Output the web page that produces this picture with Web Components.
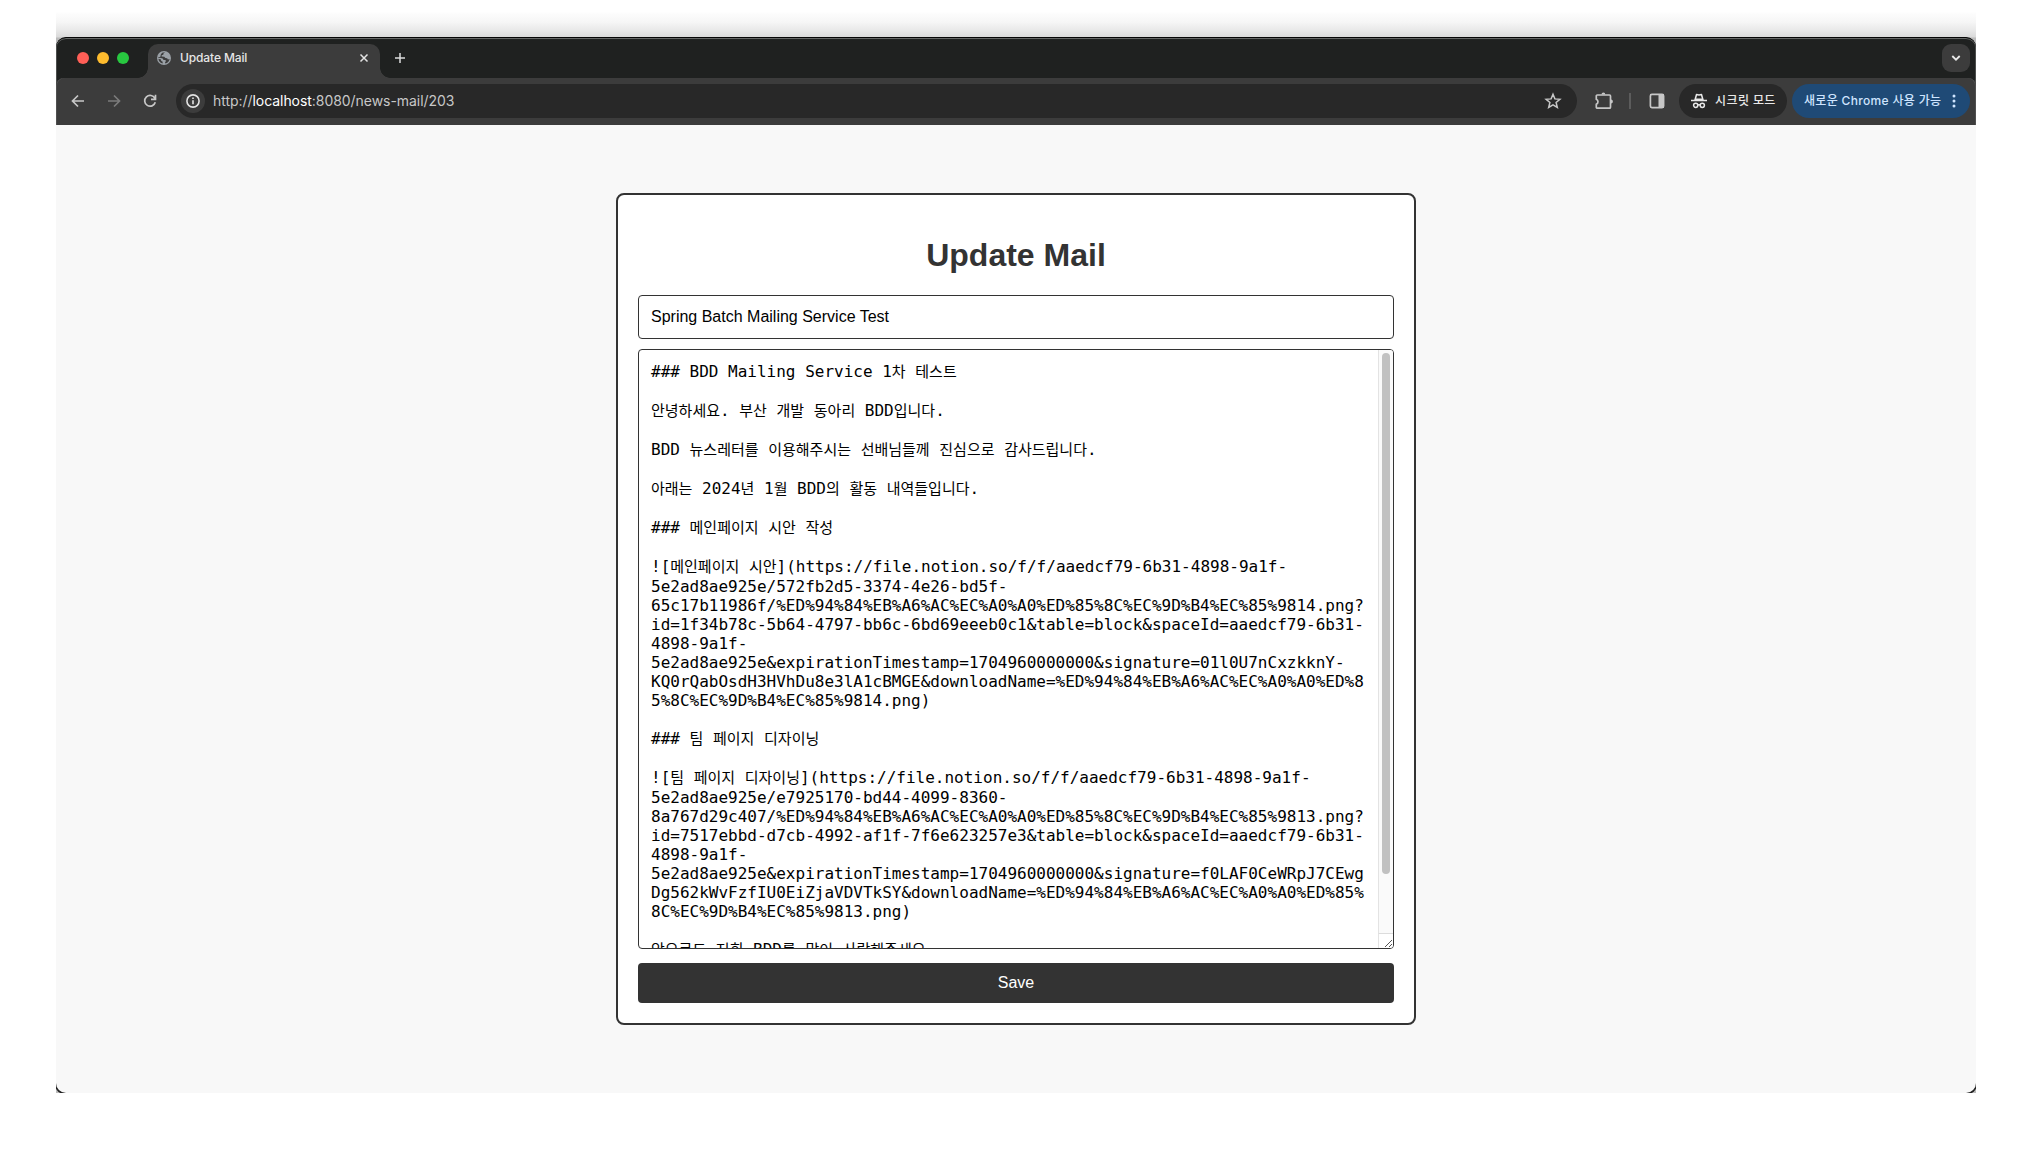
<!DOCTYPE html>
<html lang="ko">
<head>
<meta charset="utf-8">
<title>Update Mail</title>
<style>
html,body{margin:0;background:#fff}
body{width:2032px;height:1167px;overflow:hidden;font-family:Inter,"Noto Sans CJK KR",sans-serif}
</style>
</head>
<body>
<desktop-shot>
  <browser-window>
    <tab-strip slot="chrome"><browser-tab>Update Mail</browser-tab></tab-strip>
    <tool-bar slot="chrome"></tool-bar>
    <mail-card>
      <h1 slot="title">Update Mail</h1>
      <title-field>Spring Batch Mailing Service Test</title-field>
      <mail-editor></mail-editor>
      <save-button>Save</save-button>
    </mail-card>
  </browser-window>
</desktop-shot>
<script>
const define = (name, html, setup) => customElements.define(name, class extends HTMLElement {
  constructor() {
    super();
    this.attachShadow({mode: 'open'}).innerHTML = html;
    if (setup) setup(this.shadowRoot);
  }
});

define('desktop-shot', `<style>
:host{display:flex;flex-direction:column;box-sizing:border-box;width:1920px;height:1093px;margin:0 56px;padding-top:37px;
background:linear-gradient(#fff 0 12px,#fdfdfd 13px,#f6f6f6 22px,#e9e9e9 30px,#dadada 37px,#bbb 38px,#bbb)}
</style><slot></slot>`);

define('browser-window', `<style>
:host{display:flex;flex-direction:column;flex:1;overflow:hidden}
.chrome{position:relative;z-index:1;box-sizing:border-box;height:88px;border-top:1px solid #050505;border-radius:10px 10px 0 0;overflow:hidden;background:#1f2120;box-shadow:inset 0 1px #656766,inset 1px 0 #4c4e4d,inset -1px 0 #4c4e4d}
.page{flex:1;display:flex;flex-direction:column;align-items:center;box-sizing:border-box;padding-top:68px;background:#f8f8f8;border-radius:0 0 10px 10px;box-shadow:0 0 0 1.5px #222}
</style><div class="chrome"><slot name="chrome"></slot></div><div class="page"><slot></slot></div>`);

define('tab-strip', `<style>
:host{display:flex;align-items:flex-start;box-sizing:border-box;height:40px;padding:6px 6px 0 21px}
.lights{display:flex;gap:8px;padding-top:8px;width:61px}
i{width:12px;height:12px;border-radius:50%}
.plus{margin:8px 0 0 4px}
.menu{margin-left:auto;display:grid;place-items:center;width:28px;height:28px;border-radius:9px;background:#3c3c3c}
svg{display:block}
</style>
<div class="lights"><i style="background:#ff5f57"></i><i style="background:#febc2e"></i><i style="background:#28c840"></i></div>
<slot></slot>
<svg class="plus" width="12" height="12" viewBox="0 0 12 12" stroke="#dcdcdc" stroke-width="1.5"><path d="M6 1v10M1 6h10"/></svg>
<div class="menu"><svg width="10" height="8" viewBox="0 0 10 8" fill="none" stroke="#e8e8e8" stroke-width="1.8"><path d="M1.300 2 5 5.700 8.700 2"/></svg></div>`);

define('browser-tab', `<style>
:host{display:flex;align-items:center;width:252px;height:34px;color:#e6e6e6;font:500 12px Inter,sans-serif}
.edge{flex:none;width:10px;height:10px;align-self:flex-end}
.tab{flex:1;display:flex;align-items:center;box-sizing:border-box;height:34px;padding:0 11px 6px 9px;border-radius:10px 10px 0 0;background:#3c3c3c}
.name{margin-left:9px;flex:1;letter-spacing:-.12px;line-height:14px;padding-bottom:1px}
.l{background:radial-gradient(circle at 0 0,transparent 9.500px,#3c3c3c 10px)}
.r{background:radial-gradient(circle at 100% 0,transparent 9.500px,#3c3c3c 10px)}
</style>
<div class="edge l"></div>
<div class="tab">
<svg width="14" height="14" viewBox="0 0 14 14"><circle cx="7" cy="7" r="7" fill="#9aa0a6"/><path fill="#3c3c3c" d="M8.200 1.500 6.600 2.200 6.300 3.700 4.700 4.200 4.600 5.600 7.300 5.700 8.400 7.100 10.200 7.200 10.900 8.400 12.600 8A5.700 5.700 0 0 1 8.300 12.500L8 11.200 9 10.100 8.300 9.100 6.500 8.900 5.700 7.600 3.900 7 1.400 7.100A5.600 5.600 0 0 0 5.600 12.500L5.700 10.800 4.300 9.900 3.700 8.300 1.600 8 1.400 6 3.200 6.200 4 3.100 5.700 1.500z"/></svg>
<span class="name"><slot></slot></span>
<svg width="10" height="10" viewBox="0 0 10 10" stroke="#e3e3e3" stroke-width="1.500"><path d="m1.500 1.500 7 7m0-7-7 7"/></svg>
</div>
<div class="edge r"></div>`);

define('tool-bar', `<style>
:host{display:flex;align-items:center;box-sizing:border-box;height:47px;padding:0 6px 1px 15px;background:#3c3c3c;border-radius:8px 8px 0 0;box-shadow:inset 1px 0 #505050,inset -1px 0 #505050}
svg{display:block;flex:none;fill:none;stroke:#c7c7c7;stroke-width:1.700}
.nav{display:flex;gap:22px;align-items:center;width:105px}
.url{display:flex;align-items:center;box-sizing:border-box;width:1401px;height:34px;border-radius:17px;background:#282828;padding:0 15px 0 5px}
.info{display:grid;place-items:center;width:24px;height:24px;border-radius:50%;background:#3c3c3c;margin-right:8px}
.text{flex:1;font-size:14px;line-height:18px;color:#c7c7c7;letter-spacing:-.05px}
.text b{font-weight:400;color:#fff}
.tools{display:flex;align-items:center;padding-left:17px;width:85px}
.bar{width:2px;height:16px;background:#5c5c5c;margin:0 18px 0 15px}
.pill{display:flex;align-items:center;box-sizing:border-box;height:34px;border-radius:17px;background:#282828;color:#e8e8e8;font:500 12px/16px Inter,"Noto Sans CJK KR",sans-serif;white-space:nowrap}
.pill span{padding-bottom:1px}
.inc{width:108px;padding-left:12px;margin-right:5px;gap:8px;letter-spacing:.4px}
.upd{width:178px;padding-left:12px;background:#1f4a76;color:#cfe5ff;justify-content:space-between;padding-right:14px;letter-spacing:.32px}
</style>
<div class="nav">
<svg width="14" height="14" viewBox="0 0 14 14"><path d="M13 7H2M7 1.500 1.500 7 7 12.500"/></svg>
<svg width="14" height="14" viewBox="0 0 14 14" style="stroke:#7b7b7b"><path d="M1 7h11M7 1.500 12.500 7 7 12.500"/></svg>
<svg width="14" height="14" viewBox="0 0 14 14"><path d="M11.900 4.300A5.400 5.400 0 1 0 12.300 8.300M12.500.8v4.500H8"/></svg>
</div>
<div class="url">
<span class="info"><svg width="14" height="14" viewBox="0 0 14 14" style="stroke:#e3e3e3;stroke-width:1.600"><circle cx="7" cy="7" r="6.100"/><path d="M7 6.200v4M7 3.600v1.500"/></svg></span>
<span class="text">http://<b>localhost</b>:8080/news-mail/203</span>
<svg width="18" height="18" viewBox="0 0 18 18" style="stroke-width:1.500"><path d="m9 2.300 1.900 4.600 5 .4-3.800 3.200 1.200 4.900L9 12.800l-4.300 2.600 1.200-4.900-3.800-3.200 5-.4z"/></svg>
</div>
<div class="tools">
<svg width="20" height="20" viewBox="0 0 20 20"><path d="M3.300 4h12.200a1 1 0 0 1 1 1v11.200a1 1 0 0 1-1 1H3.300a1 1 0 0 1-1-1v-3a2.700 2.700 0 0 0 0-5V5a1 1 0 0 1 1-1z"/><path fill="#c7c7c7" stroke="none" d="M7.500 3.500a1.900 1.900 0 0 1 3.800 0zM17 8.600a1.900 1.900 0 0 1 0 3.800z"/></svg>
<span class="bar"></span>
<svg width="16" height="16" viewBox="0 0 16 16"><rect x="1.400" y="1.400" width="13.200" height="13.200" rx="1.500"/><path fill="#c7c7c7" stroke="none" d="M9.500 1h5.500v14H9.500z"/></svg>
</div>
<div class="pill inc">
<svg width="16" height="16" viewBox="0 0 16 16" style="stroke:#e8e8e8;stroke-width:1.500"><path d="M0 7.400h16"/><path fill="#e8e8e8" stroke="none" fill-rule="evenodd" d="M3.200 7 4.800 1.300Q5 .6 5.800.8L8 1.300l2.200-.5q.8-.2 1 .5L12.800 7zM5.200 5.600h5.600L9.900 2.400 8 2.800l-1.900-.4z"/><circle cx="4.700" cy="12.300" r="2.100"/><circle cx="11.300" cy="12.300" r="2.100"/><path d="M6.800 12q1.200-.7 2.400 0"/></svg>
<span>시크릿 모드</span></div>
<div class="pill upd"><span>새로운 Chrome 사용 가능</span>
<svg width="4" height="14" viewBox="0 0 4 14" style="fill:#cfe5ff;stroke:none"><circle cx="2" cy="2" r="1.500"/><circle cx="2" cy="7" r="1.500"/><circle cx="2" cy="12" r="1.500"/></svg></div>`);

define('mail-card', `<style>
:host{display:flex;flex-direction:column;box-sizing:border-box;width:800px;height:832px;padding:20px;border:2px solid #333;border-radius:8px;background:#fff;font-family:"Liberation Sans",Arial,sans-serif}
::slotted(h1){margin:22px 0 21px;font-size:32px;line-height:37px;text-align:center;color:#333}
</style><slot name="title"></slot><slot></slot>`);

define('title-field', `<style>
:host{display:flex;align-items:center;box-sizing:border-box;height:44px;padding:0 12px;border:1px solid #333;border-radius:4px;font-size:16px;color:#000;margin-bottom:10px}
</style><span><slot></slot></span>`);

define('mail-editor', `<style>
:host{display:flex;box-sizing:border-box;height:600px;border:1px solid #333;border-radius:4px;overflow:hidden;margin-bottom:14px;background:#fff}
.text{flex:1;padding:12px 0 0 12px;font:16px "DejaVu Sans Mono","Noto Sans CJK KR",monospace;color:#000;white-space:pre}
.row{height:19px;line-height:19px}
.row.ko{height:20px}
.row span{font-family:"Noto Sans CJK KR",sans-serif;font-size:15px;line-height:1px}
.scroll{display:flex;flex-direction:column;width:15px}
.track{flex:1;box-sizing:border-box;background:#fafafa;border-left:1px solid #e3e3e3;padding:3px 0 0 3px}
.thumb{width:8px;height:521px;border-radius:4px;background:#c1c1c1}
.grip{height:15px;box-sizing:border-box;border-left:1px solid #e3e3e3;border-top:1px solid #dcdcdc;background:#fff}
svg{display:block}
</style>
<div class="text"></div>
<div class="scroll"><div class="track"><div class="thumb"></div></div><div class="grip"><svg width="14" height="14" viewBox="0 0 14 14" stroke="#555"><path d="m6 13 7-7M10 13l3-3"/></svg></div></div>`, root => {
  const lines = `### BDD Mailing Service 1차 테스트

안녕하세요. 부산 개발 동아리 BDD입니다.

BDD 뉴스레터를 이용해주시는 선배님들께 진심으로 감사드립니다.

아래는 2024년 1월 BDD의 활동 내역들입니다.

### 메인페이지 시안 작성

![메인페이지 시안](https://file.notion.so/f/f/aaedcf79-6b31-4898-9a1f-
5e2ad8ae925e/572fb2d5-3374-4e26-bd5f-
65c17b11986f/%ED%94%84%EB%A6%AC%EC%A0%A0%ED%85%8C%EC%9D%B4%EC%85%9814.png?
id=1f34b78c-5b64-4797-bb6c-6bd69eeeb0c1&table=block&spaceId=aaedcf79-6b31-
4898-9a1f-
5e2ad8ae925e&expirationTimestamp=1704960000000&signature=01l0U7nCxzkknY-
KQ0rQabOsdH3HVhDu8e3lA1cBMGE&downloadName=%ED%94%84%EB%A6%AC%EC%A0%A0%ED%8
5%8C%EC%9D%B4%EC%85%9814.png)

### 팀 페이지 디자이닝

![팀 페이지 디자이닝](https://file.notion.so/f/f/aaedcf79-6b31-4898-9a1f-
5e2ad8ae925e/e7925170-bd44-4099-8360-
8a767d29c407/%ED%94%84%EB%A6%AC%EC%A0%A0%ED%85%8C%EC%9D%B4%EC%85%9813.png?
id=7517ebbd-d7cb-4992-af1f-7f6e623257e3&table=block&spaceId=aaedcf79-6b31-
4898-9a1f-
5e2ad8ae925e&expirationTimestamp=1704960000000&signature=f0LAF0CeWRpJ7CEwg
Dg562kWvFzfIU0EiZjaVDVTkSY&downloadName=%ED%94%84%EB%A6%AC%EC%A0%A0%ED%85%
8C%EC%9D%B4%EC%85%9813.png)

앞으로도 저희 BDD를 많이 사랑해주세요`.split('\n');
  const box = root.querySelector('.text');
  for (const line of lines) {
    const row = document.createElement('div');
    row.className = /[가-힣]/.test(line) ? 'row ko' : 'row';
    for (const part of line.split(/([가-힣]+)/)) {
      if (!part) continue;
      if (/[가-힣]/.test(part)) {
        const span = document.createElement('span');
        span.textContent = part;
        row.append(span);
      } else row.append(part);
    }
    box.append(row);
  }
});

define('save-button', `<style>
:host{display:grid;place-items:center;height:40px;border-radius:4px;background:#333;color:#fff;font-size:16px}
</style><span><slot></slot></span>`);
</script>
</body>
</html>
